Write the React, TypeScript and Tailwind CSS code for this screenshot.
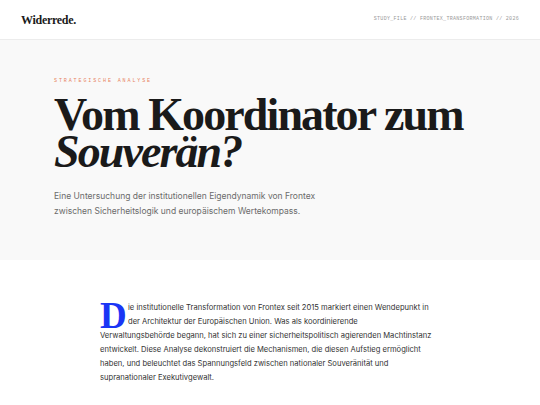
export default function App() {
  return (
    <div className="min-h-screen bg-white" style={{ fontFamily: "Inter, 'Liberation Sans', sans-serif" }}>
      {/* Header */}
      <header className="h-[40px] flex items-center justify-between px-[21px] border-b border-[#ececec] bg-white">
        <span className="text-[12px] font-bold tracking-[-0.3px] text-[#1a1a1a]" style={{ fontFamily: "'Liberation Serif', serif" }}>
          Widerrede.
        </span>
        <span className="text-[5px] tracking-[0.3px] text-[#9a9a9a]" style={{ fontFamily: "'Liberation Mono', monospace" }}>
          STUDY_FILE // FRONTEX_TRANSFORMATION // 2026
        </span>
      </header>

      {/* Hero */}
      <section className="bg-[#f9f9f9] h-[220px] px-[54px] pt-[38px]">
        <div className="text-[5px] tracking-[1.9px] text-[#e8835f] uppercase" style={{ fontFamily: "'Liberation Mono', monospace" }}>
          Strategische Analyse
        </div>
        <h1 className="mt-[10px] text-[46px] leading-[37px] font-bold tracking-[-1.9px] text-[#1a1a1a]" style={{ fontFamily: "'Liberation Serif', serif" }}>
          Vom Koordinator zum
          <br />
          <em className="italic">Souverän?</em>
        </h1>
        <p className="mt-[19px] text-[8.5px] leading-[15px] text-[#6b6b6b]">
          Eine Untersuchung der institutionellen Eigendynamik von Frontex
          <br />
          zwischen Sicherheitslogik und europäischem Wertekompass.
        </p>
      </section>

      {/* Body */}
      <section className="pt-[41px]">
        <div className="w-[340px] mx-auto text-[7.6px] leading-[14px] text-[#333333] whitespace-nowrap">
          <span
            className="float-left block w-[24px] h-[27px] mr-[4px] mt-[1px] text-[37px] leading-[27px] font-bold text-[#1a35f5]"
            style={{ fontFamily: "'Liberation Serif', serif" }}
          >
            D
          </span>
          ie institutionelle Transformation von Frontex seit 2015 markiert einen Wendepunkt in
          <br />
          der Architektur der Europäischen Union. Was als koordinierende
          <br />
          Verwaltungsbehörde begann, hat sich zu einer sicherheitspolitisch agierenden Machtinstanz
          <br />
          entwickelt. Diese Analyse dekonstruiert die Mechanismen, die diesen Aufstieg ermöglicht
          <br />
          haben, und beleuchtet das Spannungsfeld zwischen nationaler Souveränität und
          <br />
          supranationaler Exekutivgewalt.
        </div>
      </section>
    </div>
  );
}
